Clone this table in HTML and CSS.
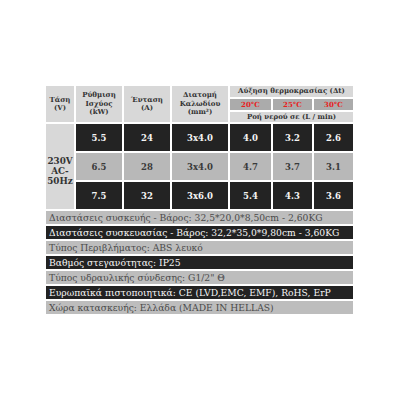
FILE: index.html
```html
<!DOCTYPE html>
<html>
<head>
<meta charset="utf-8">
<link rel="stylesheet" href="styles.css">
</head>
<body>
<div class="page">
  <div class="specs">
    <div class="grid">
      <div class="h h-tall c1">Τάση<br>(V)</div>
      <div class="h h-tall c2">Ρύθμιση<br>Ισχύος<br>(kW)</div>
      <div class="h h-tall c3">Ένταση<br>(A)</div>
      <div class="h h-tall c4">Διατομή<br>Καλωδίου<br>(mm²)</div>
      <div class="h h-wide r1">Αύξηση θερμοκρασίας (Δt)</div>
      <div class="t c5">20°C</div>
      <div class="t c6">25°C</div>
      <div class="t c7">30°C</div>
      <div class="h h-wide r3">Ροή νερού σε (L / min)</div>

      <div class="volt">230V<br>AC-<br>50Hz</div>

      <div class="d dark">5.5</div>
      <div class="d dark">24</div>
      <div class="d dark">3x4.0</div>
      <div class="d dark">4.0</div>
      <div class="d dark">3.2</div>
      <div class="d dark">2.6</div>

      <div class="d light">6.5</div>
      <div class="d light">28</div>
      <div class="d light">3x4.0</div>
      <div class="d light">4.7</div>
      <div class="d light">3.7</div>
      <div class="d light">3.1</div>

      <div class="d dark">7.5</div>
      <div class="d dark">32</div>
      <div class="d dark">3x6.0</div>
      <div class="d dark">5.4</div>
      <div class="d dark">4.3</div>
      <div class="d dark">3.6</div>
    </div>
    <div class="lines">
      <div class="line grey">Διαστάσεις συσκευής - Βάρος: 32,5*20,0*8,50cm - 2,60KG</div>
      <div class="line black">Διαστάσεις συσκευασίας - Βάρος: 32,2*35,0*9,80cm - 3,60KG</div>
      <div class="line grey">Τύπος Περιβλήματος: ABS λευκό</div>
      <div class="line black">Βαθμός στεγανότητας: IP25</div>
      <div class="line grey">Τύπος υδραυλικής σύνδεσης: G1/2" Θ</div>
      <div class="line black">Ευρωπαϊκά πιστοποιητικά: CE (LVD,EMC, EMF), RoHS, ErP</div>
      <div class="line grey">Χώρα κατασκευής: Ελλάδα (MADE IN HELLAS)</div>
    </div>
  </div>
</div>
</body>
</html>
```
FILE: styles.css
```css
html, body {
  margin: 0;
  padding: 0;
  background: #ffffff;
}
.page {
  width: 400px;
  height: 400px;
  padding: 86px 0 0 46px;
  box-sizing: border-box;
  font-family: "DejaVu Serif", "Liberation Serif", serif;
}
.specs {
  width: 307px;
  display: flex;
  flex-direction: column;
  gap: 2px;
}
.grid {
  display: grid;
  grid-template-columns: 28px 46px 46px 56px 41px 39px 39px;
  grid-template-rows: 11px 11px 10px 27px 27px 27px;
  column-gap: 2px;
  row-gap: 2px;
}
.h {
  background: #d8d8d8;
  color: #333333;
  font-size: 7px;
  font-weight: bold;
  line-height: 8.5px;
  display: flex;
  align-items: center;
  justify-content: center;
  text-align: center;
}
.h-tall { grid-row: 1 / 4; }
.c1 { grid-column: 1; }
.c2 { grid-column: 2; }
.c3 { grid-column: 3; }
.c4 { grid-column: 4; }
.h-wide { grid-column: 5 / 8; }
.r1 { grid-row: 1; }
.r3 { grid-row: 3; }
.t {
  grid-row: 2;
  background: #ababab;
  color: #e8201c;
  font-size: 7px;
  font-weight: bold;
  display: flex;
  align-items: center;
  justify-content: center;
}
.c5 { grid-column: 5; }
.c6 { grid-column: 6; }
.c7 { grid-column: 7; }
.volt {
  grid-column: 1;
  grid-row: 4 / 7;
  background: #d8d8d8;
  color: #333;
  font-size: 8.8px;
  font-weight: bold;
  line-height: 10px;
  display: flex;
  align-items: center;
  justify-content: center;
  text-align: center;
  padding-top: 8px;
}
.d {
  display: flex;
  align-items: center;
  justify-content: center;
  font-size: 8.5px;
  font-weight: bold;
}
.dark {
  background: #232323;
  color: #f4f4f4;
}
.light {
  background: #b8b8b8;
  color: #3a3a3a;
}
.lines {
  display: flex;
  flex-direction: column;
  gap: 2px;
}
.line {
  height: 13px;
  line-height: 13px;
  padding-left: 3px;
  font-size: 9.2px;
  white-space: nowrap;
  overflow: hidden;
}
.grey {
  background: #bdbdbd;
  color: #4a4a4a;
}
.black {
  background: #222222;
  color: #f6f6f6;
}
```
